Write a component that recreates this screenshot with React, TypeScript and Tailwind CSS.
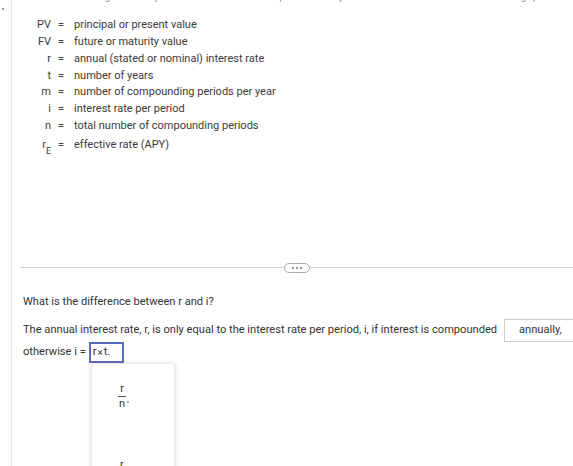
import React from "react";

const rows: { s: React.ReactNode; t: string }[] = [
  { s: "PV", t: "principal or present value" },
  { s: "FV", t: "future or maturity value" },
  { s: "r", t: "annual (stated or nominal) interest rate" },
  { s: "t", t: "number of years" },
  { s: "m", t: "number of compounding periods per year" },
  { s: "i", t: "interest rate per period" },
  { s: "n", t: "total number of compounding periods" },
];

export default function App() {
  return (
    <div
      className="relative flex w-[573px] h-[466px] overflow-hidden bg-white text-[#333]"
      style={{ fontFamily: "Roboto, 'Noto Sans', Arial, sans-serif" }}
    >
      <div className="relative w-[12px] shrink-0 border-r border-[#e6e6e6]">
        <div className="absolute left-[2px] top-[8px] h-[2px] w-[2px] bg-[#999]" />
      </div>
      <div className="flex-1 flex flex-col min-w-0">
        <div className="h-[6px] overflow-hidden">
          <div className="-mt-[10px] pl-[14px] whitespace-nowrap text-[11px] leading-[14px] text-[#999]">
            Use the following summary of notation used for simple and compound interest to answer the following questions.
          </div>
        </div>
        <div className="mt-[11px] grid grid-cols-[39px_23px_1fr] text-[11px] text-[#3a3a3a]">
          {rows.map((r, i) => (
            <React.Fragment key={i}>
              <div className="h-[16.8px] flex items-center justify-end">{r.s}</div>
              <div className="h-[16.8px] flex items-center pl-[7px]">=</div>
              <div className="h-[16.8px] flex items-center">{r.t}</div>
            </React.Fragment>
          ))}
          <div className="h-[22px] flex items-center justify-end">
            <span>
              r<sub className="text-[9px] align-[-3px]">E</sub>
            </span>
          </div>
          <div className="h-[22px] flex items-center pl-[7px]">=</div>
          <div className="h-[22px] flex items-center">effective rate (APY)</div>
        </div>

        <div className="mt-[105px] ml-[8px] flex items-center h-[12px]">
          <div className="flex-1 h-px bg-[#d4d4d4]" />
          <div className="w-[26px] h-[10px] rounded-full border border-[#aaa] flex items-center justify-center gap-[2px]">
            <span className="w-[2px] h-[2px] rounded-full bg-[#777]" />
            <span className="w-[2px] h-[2px] rounded-full bg-[#777]" />
            <span className="w-[2px] h-[2px] rounded-full bg-[#777]" />
          </div>
          <div className="flex-1 h-px bg-[#d4d4d4]" />
        </div>

        <div className="mt-[16px] pl-[11px] text-[11.1px] leading-[24px] h-[24px]">
          What is the difference between r and i?
        </div>

        <div className="mt-[5px] pl-[11px] flex items-center h-[23px] text-[11.1px] whitespace-nowrap">
          <span>
            The annual interest rate, r, is only equal to the interest rate per period, i, if interest is compounded
          </span>
          <div className="ml-[7px] shrink-0 w-[80px] h-[23px] border border-[#c8ccd4] flex items-center pl-[14px]">
            annually,
          </div>
        </div>

        <div className="pl-[11px] flex items-center h-[21px] text-[11.1px] whitespace-nowrap">
          <span>otherwise i =</span>
          <div className="ml-[3px] w-[35px] h-[21px] border-2 border-[#5b6cb8] flex items-center pl-[2px]">
            r<span className="mx-[1px] text-[10px]">×</span>t.
          </div>
        </div>
      </div>

      <div className="absolute left-[91px] top-[363px] w-[84px] h-[120px] bg-white border border-[#ececec] rounded-[3px] shadow-[0_1px_4px_rgba(0,0,0,0.18)] text-[11px]">
        <div className="absolute left-[26px] top-[19px] flex items-center">
          <div className="flex flex-col items-center">
            <span className="leading-[12px]">r</span>
            <span className="w-[8px] h-px bg-[#555] my-[1px]" />
            <span className="leading-[12px]">n</span>
          </div>
          <span className="ml-[1px] mt-[6px] text-[9px]">,</span>
        </div>
        <div className="absolute left-[28px] top-[95px] leading-[12px]">r</div>
      </div>
    </div>
  );
}
